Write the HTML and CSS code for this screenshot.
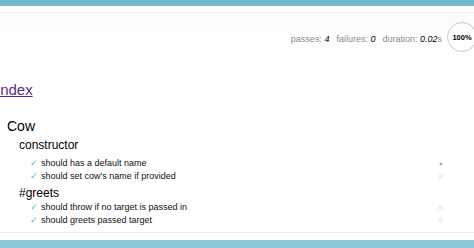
FILE: index.html
```html
<!DOCTYPE html>
<html>
<head>
<meta charset="utf-8">
<link rel="stylesheet" href="styles.css">
</head>
<body>
<div class="topbar"></div>
<div class="page">
  <div class="stats">
    <span class="stat">passes: <em>4</em></span>
    <span class="stat">failures: <em>0</em></span>
    <span class="stat">duration: <em>0.02</em>s</span>
    <span class="progress">100%</span>
  </div>
  <h1 class="title"><a href="#" class="title-link">Index</a></h1>
  <div class="suite">
    <h2 class="suite-name">Cow</h2>
    <div class="subsuite">
      <h3 class="sub-name">constructor</h3>
      <div class="test"><span class="check">✓</span><span class="test-name">should has a default name</span><span class="replay dark"></span></div>
      <div class="test"><span class="check">✓</span><span class="test-name">should set cow's name if provided</span><span class="replay"></span></div>
      <h3 class="sub-name greets">#greets</h3>
      <div class="test"><span class="check">✓</span><span class="test-name">should throw if no target is passed in</span><span class="replay"></span></div>
      <div class="test"><span class="check">✓</span><span class="test-name">should greets passed target</span><span class="replay"></span></div>
    </div>
  </div>
</div>
<div class="bottom-line"></div>
<div class="bottombar"></div>
</body>
</html>
```

FILE: styles.css
```css
html, body {
  margin: 0;
  padding: 0;
  background: #ffffff;
  overflow: hidden;
}
body {
  width: 474px;
  height: 248px;
  font-family: "Liberation Sans", Arial, sans-serif;
  color: #000;
  display: flex;
  flex-direction: column;
}
.topbar {
  height: 6px;
  background: #6fb8cc;
  flex: none;
}
.page {
  flex: 1;
  margin-top: 6px;
  border-top: 1px solid #e9f3ef;
  background: linear-gradient(#fbfbfe, #ffffff 20px);
}
.stats {
  display: flex;
  justify-content: flex-end;
  align-items: center;
  gap: 7px;
  padding-top: 9px;
  margin-right: -3px;
  font-size: 9px;
  color: #8a8a8a;
}
.stat {
  position: relative;
  top: 2px;
}
.stat em {
  color: #000;
  font-style: italic;
}
.progress {
  width: 28px;
  height: 28px;
  border: 1px solid #c8c8c8;
  border-radius: 50%;
  display: flex;
  align-items: center;
  justify-content: center;
  color: #000;
  font-size: 7.5px;
  font-weight: bold;
  margin-left: -2px;
}
.title {
  margin: 29px 0 0 -4px;
  font-size: 15px;
  line-height: 18px;
  font-weight: normal;
}
.title-link {
  color: #5a2d91;
  text-decoration: underline;
}
.suite {
  margin-top: 18px;
}
.suite-name {
  margin: 0 0 0 7px;
  font-size: 14px;
  line-height: 18px;
  font-weight: normal;
}
.subsuite {
  margin-left: 19px;
}
.sub-name {
  margin: 2px 0 4px 0;
  font-size: 12px;
  line-height: 16px;
  font-weight: normal;
}
.sub-name.greets {
  margin-top: 2px;
  margin-bottom: 0;
}
.test {
  display: flex;
  align-items: center;
  height: 13px;
  font-size: 9px;
  line-height: 13px;
  margin-left: 11px;
}
.check {
  color: #2fd2b4;
  width: 11px;
  font-size: 9px;
}
.test-name {
  flex: 1;
  color: #111;
}
.replay {
  width: 5px;
  height: 5px;
  border-radius: 50%;
  background: #f1f1f1;
  margin-right: 31px;
  position: relative;
}
.replay.dark::after {
  content: "";
  position: absolute;
  left: 1.5px;
  top: 1.5px;
  width: 2px;
  height: 2px;
  border-radius: 50%;
  background: #888;
}
.bottom-line {
  height: 1px;
  background: #ececec;
  margin-bottom: 7px;
  flex: none;
}
.bottombar {
  height: 8px;
  background: #8ecbd8;
  flex: none;
}
```
